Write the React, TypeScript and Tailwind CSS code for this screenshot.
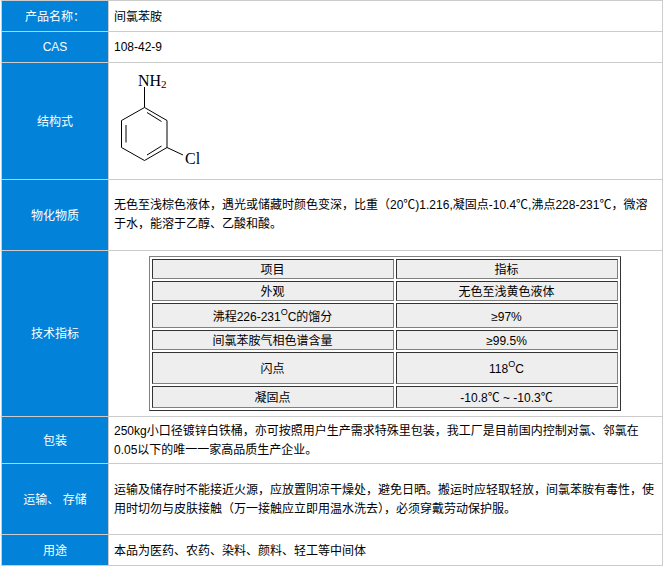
const labelClass = "bg-[#0282d9] border border-[#cccccc] px-0 pt-[2px] pb-0 text-center align-middle text-white";
const valueClass = "border border-[#cccccc] pl-[5px] pr-0 pt-[2px] pb-0 align-middle text-left text-black leading-[19px] whitespace-nowrap";
const specClass =
  "border border-t-[#333333] border-l-[#333333] border-r-[#808080] border-b-[#808080] bg-[#eeeeee] px-0 pt-[2px] pb-0 text-center align-middle leading-[16px] text-black";

const rows = [
  { h: "h-[20px]", name: <>项目</>, value: <>指标</> },
  { h: "h-[20px]", name: <>外观</>, value: <>无色至浅黄色液体</> },
  {
    h: "h-[25px]",
    name: (
      <>
        沸程226-231<Deg />C的馏分
      </>
    ),
    value: <>≥97%</>,
  },
  { h: "h-[20px]", name: <>间氯苯胺气相色谱含量</>, value: <>≥99.5%</> },
  {
    h: "h-[32px]",
    name: <>闪点</>,
    value: (
      <>
        118<Deg />C
      </>
    ),
  },
  { h: "h-[22px]", name: <>凝固点</>, value: <>-10.8℃ ~ -10.3℃</> },
];

function Deg() {
  return <sup className="top-[-6px] text-[9px]">O</sup>;
}

function Molecule() {
  return (
    <svg width="100" height="116" viewBox="0 3 100 116" className="block">
      <g stroke="#000" strokeWidth="1" fill="none">
        <path d="M30.5 27V47.5L53 60.5V87.5L30.5 100.5L7.5 87.5V60.5L30.5 47.5" />
        <path d="M33 52.5L47.5 61.5M12 65V82.5M33 95L47.5 86M53 87.5L69 95" />
      </g>
      <text x="24" y="26" fontFamily="'Liberation Serif', serif" fontSize="16" fill="#000">
        NH
      </text>
      <text x="47" y="28" fontFamily="'Liberation Serif', serif" fontSize="11" fill="#000">
        2
      </text>
      <text x="71" y="104" fontFamily="'Liberation Serif', serif" fontSize="16" fill="#000">
        Cl
      </text>
    </svg>
  );
}

function SpecTable() {
  return (
    <table className="mx-auto w-[472px] table-fixed border-separate border-spacing-[2px] border border-t-[#808080] border-l-[#808080] border-r-[#333333] border-b-[#333333] text-[12px]">
      <colgroup>
        <col className="w-[242px]" />
        <col className="w-[222px]" />
      </colgroup>
      <tbody>
        {rows.map((row, i) => (
          <tr key={i} className={row.h}>
            <td className={specClass}>{row.name}</td>
            <td className={specClass}>{row.value}</td>
          </tr>
        ))}
      </tbody>
    </table>
  );
}

export default function App() {
  return (
    <div className="min-h-[567px] bg-white font-['Liberation_Sans','Noto_Sans_CJK_SC',sans-serif] text-[12px]">
      <table className="ml-px w-[661px] table-fixed border-collapse">
        <colgroup>
          <col className="w-[107px]" />
          <col className="w-[554px]" />
        </colgroup>
        <tbody>
          <tr className="h-[31px]">
            <td className={labelClass}>产品名称：</td>
            <td className={valueClass}>间氯苯胺</td>
          </tr>
          <tr className="h-[31px]">
            <td className="border border-[#cccccc] bg-[#0282d9] p-0 text-center align-middle text-white">CAS</td>
            <td className="whitespace-nowrap border border-[#cccccc] py-0 pl-[5px] pr-0 text-left align-middle leading-[19px] text-black">
              108-42-9
            </td>
          </tr>
          <tr className="h-[117px]">
            <td className={labelClass}>结构式</td>
            <td className="border border-[#cccccc] py-0 pl-[5px] pr-0 align-middle">
              <Molecule />
            </td>
          </tr>
          <tr className="h-[71px]">
            <td className={labelClass}>物化物质</td>
            <td className="whitespace-nowrap border border-[#cccccc] py-0 pl-[5px] pr-0 text-left align-middle leading-[19px] text-black">
              无色至浅棕色液体，遇光或储藏时颜色变深，比重（20℃)1.216,凝固点-10.4℃,沸点228-231℃，微溶
              <br />
              于水，能溶于乙醇、乙酸和酸。
            </td>
          </tr>
          <tr className="h-[166px]">
            <td className="border border-[#cccccc] bg-[#0282d9] p-0 text-center align-middle text-white">技术指标</td>
            <td className="border border-[#cccccc] py-0 pl-0 pr-[2px] align-middle">
              <SpecTable />
            </td>
          </tr>
          <tr className="h-[47px]">
            <td className={labelClass}>包装</td>
            <td className={valueClass}>
              250kg小口径镀锌白铁桶，亦可按照用户生产需求特殊里包装，我工厂是目前国内控制对氯、邻氯在
              <br />
              0.05以下的唯一一家高品质生产企业。
            </td>
          </tr>
          <tr className="h-[71px]">
            <td className={labelClass}>运输、 存储</td>
            <td className={valueClass}>
              运输及储存时不能接近火源，应放置阴凉干燥处，避免日晒。搬运时应轻取轻放，间氯苯胺有毒性，使
              <br />
              用时切勿与皮肤接触（万一接触应立即用温水洗去），必须穿戴劳动保护服。
            </td>
          </tr>
          <tr className="h-[31px]">
            <td className={labelClass}>用途</td>
            <td className={valueClass}>本品为医药、农药、染料、颜料、轻工等中间体</td>
          </tr>
        </tbody>
      </table>
    </div>
  );
}
